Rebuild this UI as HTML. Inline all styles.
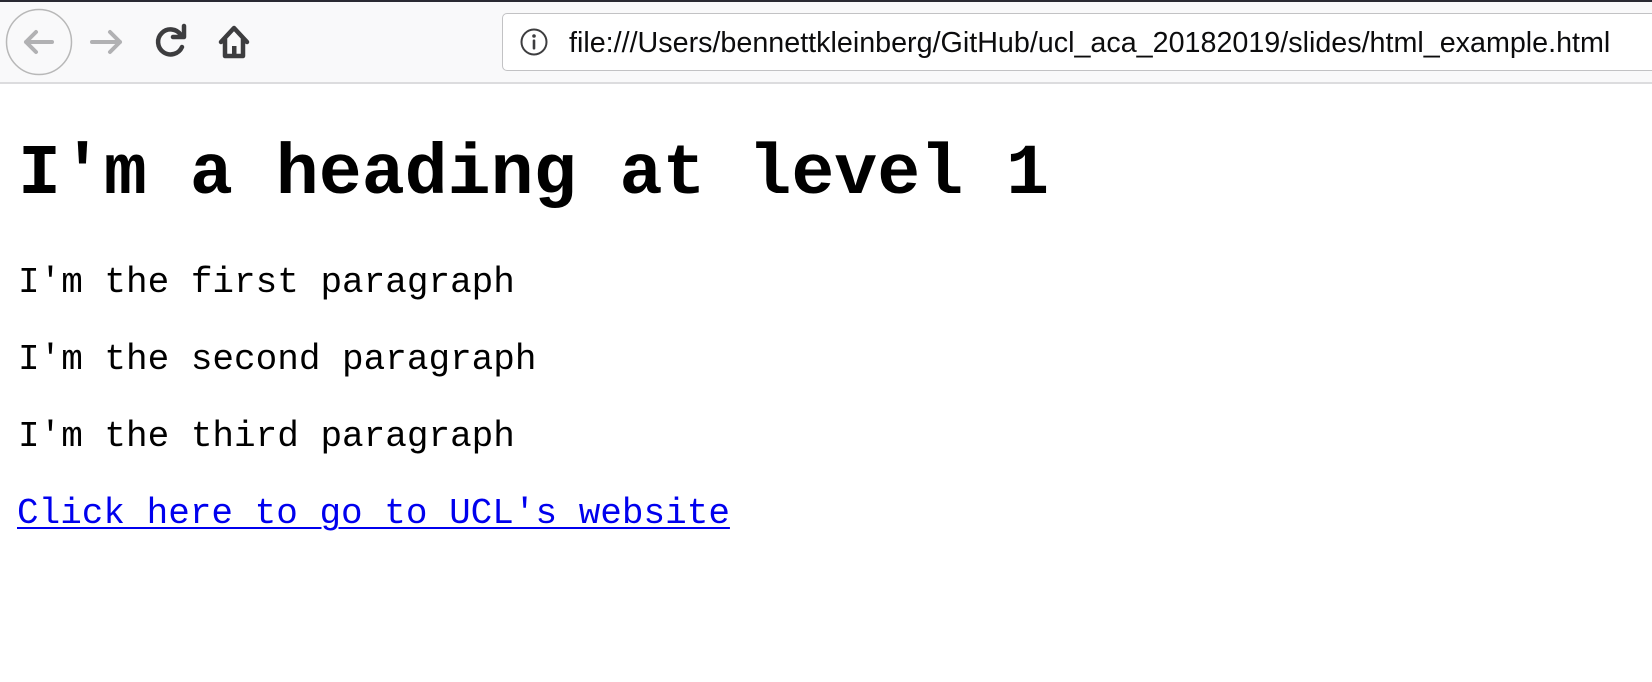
<!DOCTYPE html>
<html><head><meta charset="utf-8"><style>
*{margin:0;padding:0;box-sizing:border-box}
body{width:1652px;height:682px;background:#fff;position:relative;overflow:hidden;font-family:"Liberation Sans",sans-serif}
#top{position:absolute;left:0;top:0;width:1652px;height:2px;background:#2a2a33}
#bar{position:absolute;left:0;top:2px;width:1652px;height:82px;background:#f9f9fa;border-bottom:2px solid #dcdcde}
#url{position:absolute;left:502px;top:13px;width:1240px;height:58px;background:#fff;border:1.5px solid #c2c2c4;border-radius:5px}
#urltext{position:absolute;left:569px;top:23px;font-size:28.7px;line-height:40px;color:#0c0c0d;white-space:nowrap}
.mono{position:absolute;left:18px;font-family:"Liberation Mono",monospace;white-space:nowrap;color:#000}
.p{font-size:36px;line-height:36px}
h1{position:absolute;left:18px;top:139px;font-family:"Liberation Mono",monospace;font-size:71.6px;line-height:71px;font-weight:bold;white-space:nowrap}
a{color:#0000ee;text-decoration:underline;text-underline-offset:4px;text-decoration-thickness:1.5px}
</style></head><body>
<div id="top"></div>
<div id="bar"></div>
<svg style="position:absolute;left:0;top:0" width="270" height="84">
<circle cx="39" cy="42" r="32.5" fill="none" stroke="#b8b8b8" stroke-width="1.5"/>
<path d="M26 42H52M26 42L36 32M26 42L36 52" fill="none" stroke="#b1b1b3" stroke-width="4" stroke-linecap="round" stroke-linejoin="round"/>
<path d="M92 42H120M120 42L110 32M120 42L110 52" fill="none" stroke="#b1b1b3" stroke-width="4" stroke-linecap="round" stroke-linejoin="round"/>
<path d="M181 35A12.5 12.5 0 1 0 182 47" fill="none" stroke="#3d3d3f" stroke-width="4.5" stroke-linecap="round"/>
<path d="M173 37H184V26" fill="none" stroke="#3d3d3f" stroke-width="4.5" stroke-linecap="round" stroke-linejoin="round"/>
<path d="M221 42L234 28L247 42M225 39V56H243V39" fill="none" stroke="#3d3d3f" stroke-width="4.5" stroke-linecap="round" stroke-linejoin="round"/>
<rect x="232" y="46" width="4.5" height="8" fill="#3d3d3f"/>
</svg>
<div id="url"></div>
<svg style="position:absolute;left:519px;top:27px" width="30" height="30"><circle cx="15" cy="15" r="12.5" fill="none" stroke="#3d3d3f" stroke-width="2"/><circle cx="15" cy="9" r="1.8" fill="#3d3d3f"/><rect x="13.7" y="12.5" width="2.6" height="10" rx="1" fill="#3d3d3f"/></svg>
<div id="urltext">file:///Users/bennettkleinberg/GitHub/ucl_aca_20182019/slides/html_example.html</div>
<h1>I'm a heading at level 1</h1>
<div class="mono p" style="top:265px">I'm the first paragraph</div>
<div class="mono p" style="top:342px">I'm the second paragraph</div>
<div class="mono p" style="top:419px">I'm the third paragraph</div>
<div class="mono p" style="top:496px;left:17px"><a>Click here to go to UCL's website</a></div>
</body></html>
